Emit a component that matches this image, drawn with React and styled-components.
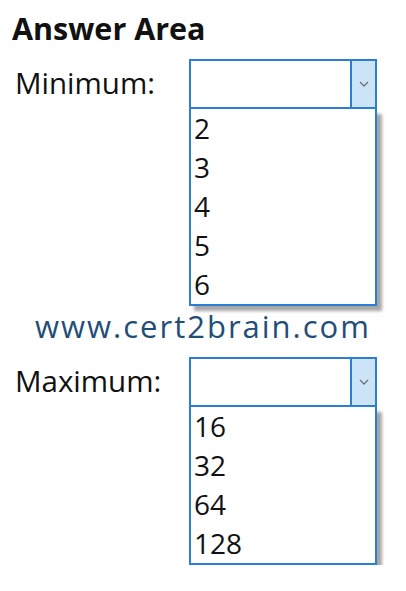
import styled, { createGlobalStyle } from "styled-components";

const GlobalStyle = createGlobalStyle`
  body {
    margin: 0;
    background: #ffffff;
    font-family: "Open Sans", Lato, sans-serif;
    color: #111111;
  }
`;

const minOptions = ["2", "3", "4", "5", "6"];
const maxOptions = ["16", "32", "64", "128"];

const Chevron = () => (
  <svg width="10" height="6" viewBox="0 0 10 6">
    <path d="M1 1 L5 5 L9 1" fill="none" stroke="#707070" strokeWidth="1.3" />
  </svg>
);

const DropdownField = ({ label, options }) => (
  <FieldRow>
    <Label>{label}</Label>
    <SelectColumn>
      <SelectBox>
        <SelectValue />
        <SelectButton>
          <Chevron />
        </SelectButton>
      </SelectBox>
      <OptionList>
        {options.map((opt) => (
          <OptionItem key={opt}>{opt}</OptionItem>
        ))}
      </OptionList>
    </SelectColumn>
  </FieldRow>
);

const App = () => {
  return (
    <Page>
      <GlobalStyle />
      <Title>Answer Area</Title>
      <DropdownField label="Minimum:" options={minOptions} />
      <Watermark>www.cert2brain.com</Watermark>
      <DropdownField label="Maximum:" options={maxOptions} />
    </Page>
  );
};

const Page = styled.div`
  width: 406px;
  padding: 8px 0 0 12px;
  box-sizing: border-box;
`;

const Title = styled.h1`
  margin: 0;
  font-size: 30.5px;
  font-weight: 700;
  line-height: 40px;
  color: #111111;
`;

const FieldRow = styled.div`
  display: grid;
  grid-template-columns: 177px 188px;
  margin-top: 11px;
`;

const Label = styled.div`
  font-size: 29.5px;
  line-height: 48px;
  padding-left: 3px;
`;

const SelectColumn = styled.div`
  display: flex;
  flex-direction: column;
`;

const SelectBox = styled.div`
  display: flex;
  height: 50px;
  box-sizing: border-box;
  border: 2px solid #2a7fd4;
`;

const SelectValue = styled.div`
  flex: 1;
  background: #ffffff;
`;

const SelectButton = styled.div`
  width: 23px;
  border-left: 2px solid #2a7fd4;
  background: #cce4f7;
  display: flex;
  align-items: center;
  justify-content: center;
`;

const OptionList = styled.div`
  border: 2px solid #2a7fd4;
  border-top: none;
  background: #ffffff;
  box-shadow: 5px 5px 3px rgba(0, 0, 0, 0.35);
`;

const OptionItem = styled.div`
  font-size: 28px;
  line-height: 39px;
  padding-left: 3px;
  color: #111111;
`;

const Watermark = styled.div`
  margin-left: -12px;
  text-align: center;
  font-size: 31px;
  line-height: 40px;
  letter-spacing: 2px;
  color: #1f4e79;
`;

export default App;
